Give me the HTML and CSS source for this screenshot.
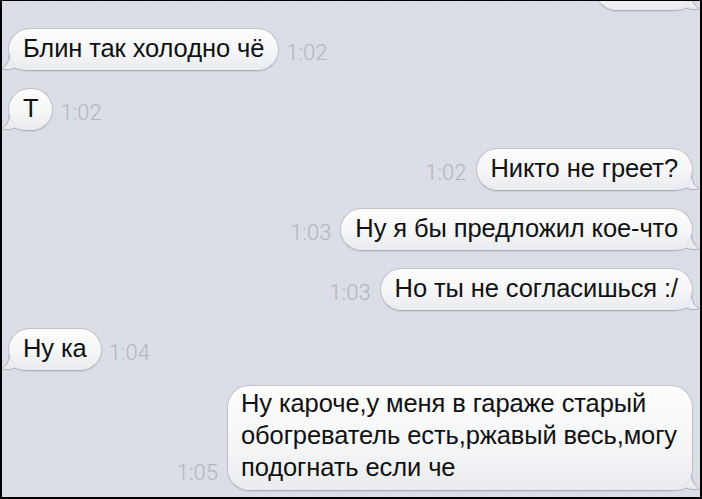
FILE: index.html
```html
<!DOCTYPE html>
<html lang="ru">
<head>
  <meta charset="UTF-8" />
  <title>Сообщения</title>
  <link rel="stylesheet" href="styles.css">
</head>
<body>
  <div class="screen">
    <div class="chat">
      <div class="row out cut">
        <div class="bubble stub"></div>
      </div>

      <div class="row in">
        <div class="bubble">Блин так холодно чё</div>
        <span class="time">1:02</span>
      </div>

      <div class="row in">
        <div class="bubble">Т</div>
        <span class="time">1:02</span>
      </div>

      <div class="row out">
        <span class="time">1:02</span>
        <div class="bubble">Никто не греет?</div>
      </div>

      <div class="row out">
        <span class="time">1:03</span>
        <div class="bubble">Ну я бы предложил кое-что</div>
      </div>

      <div class="row out">
        <span class="time">1:03</span>
        <div class="bubble">Но ты не согласишься :/</div>
      </div>

      <div class="row in">
        <div class="bubble">Ну ка</div>
        <span class="time">1:04</span>
      </div>

      <div class="row out last">
        <span class="time">1:05</span>
        <div class="bubble long">Ну кароче,у меня в гараже старый<br>обогреватель есть,ржавый весь,могу<br>подогнать если че</div>
      </div>
    </div>
  </div>
</body>
</html>
```

FILE: styles.css
```css
body {
  margin: 0;
  background: #000;
}

.screen {
  width: 702px;
  height: 499px;
  box-sizing: border-box;
  border: 2px solid #000;
  border-top-width: 1px;
  background-color: #dadde5;
  background-image: repeating-linear-gradient(90deg, rgba(255, 255, 255, 0.07) 0 1px, transparent 1px 3px);
  overflow: hidden;
}

.chat {
  display: flex;
  flex-direction: column;
  gap: 17px;
  padding: 0 7px 0 6px;
}

.row {
  display: flex;
  align-items: flex-end;
  gap: 7px;
}

.row.out {
  justify-content: flex-end;
  gap: 9px;
}

.row.cut {
  margin-top: -33px;
}

.row.last {
  margin-top: -3px;
}

.bubble {
  position: relative;
  font-family: "Liberation Sans", Arial, sans-serif;
  font-size: 25.5px;
  line-height: 25px;
  letter-spacing: -0.1px;
  color: #111;
  padding: 7px 14px 9px;
  border: 1px solid #bfc2ca;
  border-bottom-color: #a9adb7;
  border-radius: 22px;
  background: linear-gradient(#fdfdfd, #f4f5f7 60%, #e9ebee);
  box-shadow: 0 1px 1px rgba(0, 0, 0, 0.08);
  white-space: nowrap;
}

.bubble.stub {
  width: 68px;
  height: 25px;
}

.bubble.long {
  line-height: 32px;
  padding: 1px 15px 7px 13px;
}

/* хвостик пузыря */
.bubble::after {
  content: "";
  position: absolute;
  bottom: -1px;
  width: 30px;
  height: 16px;
  background: url("data:image/svg+xml;utf8,<svg xmlns='http://www.w3.org/2000/svg' width='30' height='16'><path d='M9.5 0 C9.5 5 7 10 1 13.8 C5 15.2 10 15 13.5 13 C17 15 22 15.6 30 15.5 L30 13.5 C20 13.2 14 10 11.5 6 C10.5 4 10.2 2 10.2 0 Z' fill='%23eaecef'/><path d='M8.3 0 C8.3 5 6 10 0.8 13.8 C5 15.2 10 15 13.5 13 C17 15 22 15.6 30 15.5' fill='none' stroke='%23adb1bb' stroke-width='1'/></svg>") no-repeat;
}

.in .bubble::after {
  left: -8px;
}

.out .bubble::after {
  right: -8px;
  transform: scaleX(-1);
}

.time {
  font-family: Roboto, "Liberation Sans", sans-serif;
  font-weight: 300;
  font-size: 22px;
  line-height: 20px;
  color: #b2b6bf;
  margin-bottom: 8px;
}
```
